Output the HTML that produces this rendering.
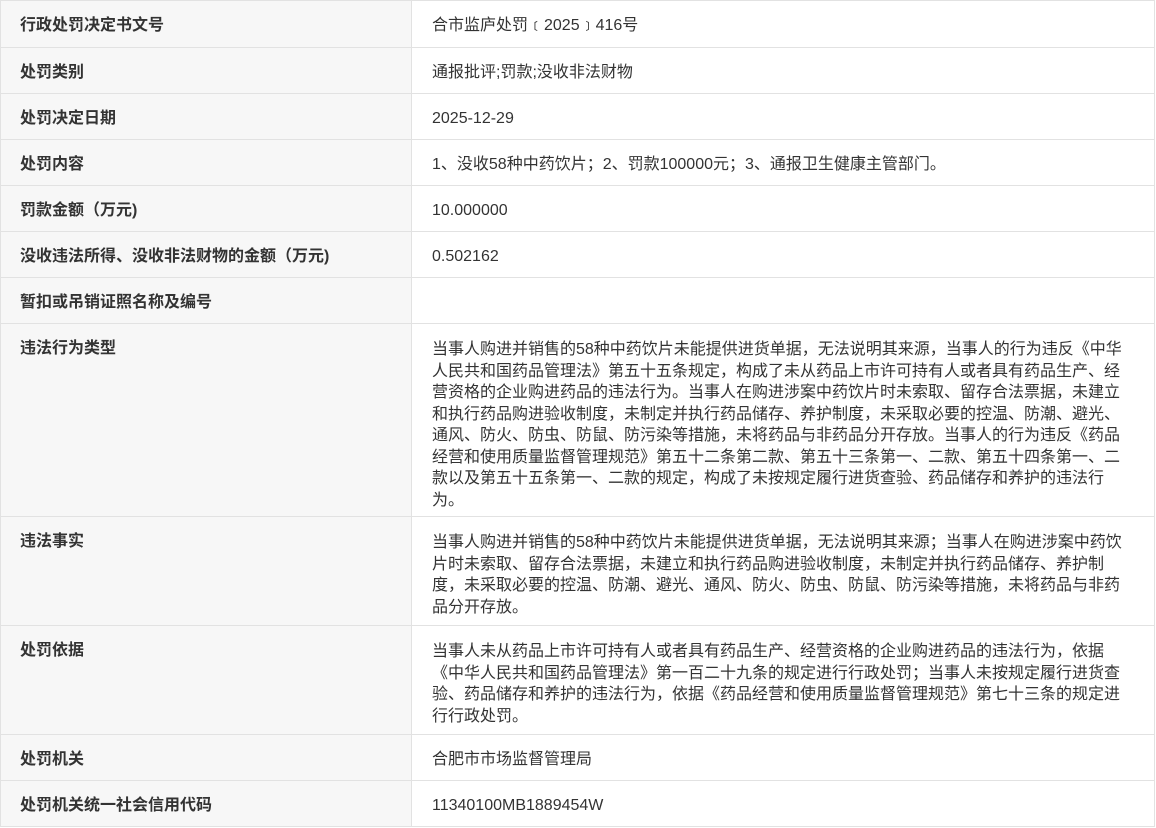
<!DOCTYPE html>
<html><head><meta charset="utf-8"><style>
html,body{margin:0;padding:0;background:#fff;}
body{width:1156px;height:828px;overflow:hidden;font-family:"Liberation Sans","Noto Sans CJK SC",sans-serif;font-size:16px;color:#333;}
table{border-collapse:collapse;position:absolute;left:0;top:0;width:1155px;table-layout:fixed;}
td{border:1px solid #e2e2e2;vertical-align:top;padding:14px 0 0 20px;line-height:21.5px;box-sizing:border-box;white-space:nowrap;overflow:hidden;}
td.l{width:411px;background:#f7f7f7;font-weight:bold;padding-left:19px;}
td.r{padding-top:15px;}
</style></head><body>
<table>
<tr style="height:47px"><td class="l">行政处罚决定书文号</td><td>合市监庐处罚﹝2025﹞416号</td></tr>
<tr style="height:46px"><td class="l">处罚类别</td><td>通报批评;罚款;没收非法财物</td></tr>
<tr style="height:46px"><td class="l">处罚决定日期</td><td>2025-12-29</td></tr>
<tr style="height:46px"><td class="l">处罚内容</td><td>1、没收58种中药饮片；2、罚款100000元；3、通报卫生健康主管部门。</td></tr>
<tr style="height:46px"><td class="l">罚款金额（万元)</td><td>10.000000</td></tr>
<tr style="height:46px"><td class="l">没收违法所得、没收非法财物的金额（万元)</td><td>0.502162</td></tr>
<tr style="height:46px"><td class="l">暂扣或吊销证照名称及编号</td><td></td></tr>
<tr style="height:193px"><td class="l">违法行为类型</td><td class="r">当事人购进并销售的58种中药饮片未能提供进货单据，无法说明其来源，当事人的行为违反《中华<br>人民共和国药品管理法》第五十五条规定，构成了未从药品上市许可持有人或者具有药品生产、经<br>营资格的企业购进药品的违法行为。当事人在购进涉案中药饮片时未索取、留存合法票据，未建立<br>和执行药品购进验收制度，未制定并执行药品储存、养护制度，未采取必要的控温、防潮、避光、<br>通风、防火、防虫、防鼠、防污染等措施，未将药品与非药品分开存放。当事人的行为违反《药品<br>经营和使用质量监督管理规范》第五十二条第二款、第五十三条第一、二款、第五十四条第一、二<br>款以及第五十五条第一、二款的规定，构成了未按规定履行进货查验、药品储存和养护的违法行<br>为。</td></tr>
<tr style="height:109px"><td class="l">违法事实</td><td class="r">当事人购进并销售的58种中药饮片未能提供进货单据，无法说明其来源；当事人在购进涉案中药饮<br>片时未索取、留存合法票据，未建立和执行药品购进验收制度，未制定并执行药品储存、养护制<br>度，未采取必要的控温、防潮、避光、通风、防火、防虫、防鼠、防污染等措施，未将药品与非药<br>品分开存放。</td></tr>
<tr style="height:109px"><td class="l">处罚依据</td><td class="r">当事人未从药品上市许可持有人或者具有药品生产、经营资格的企业购进药品的违法行为，依据<br>《中华人民共和国药品管理法》第一百二十九条的规定进行行政处罚；当事人未按规定履行进货查<br>验、药品储存和养护的违法行为，依据《药品经营和使用质量监督管理规范》第七十三条的规定进<br>行行政处罚。</td></tr>
<tr style="height:46px"><td class="l">处罚机关</td><td>合肥市市场监督管理局</td></tr>
<tr style="height:46px"><td class="l">处罚机关统一社会信用代码</td><td>11340100MB1889454W</td></tr>
</table>
</body></html>
